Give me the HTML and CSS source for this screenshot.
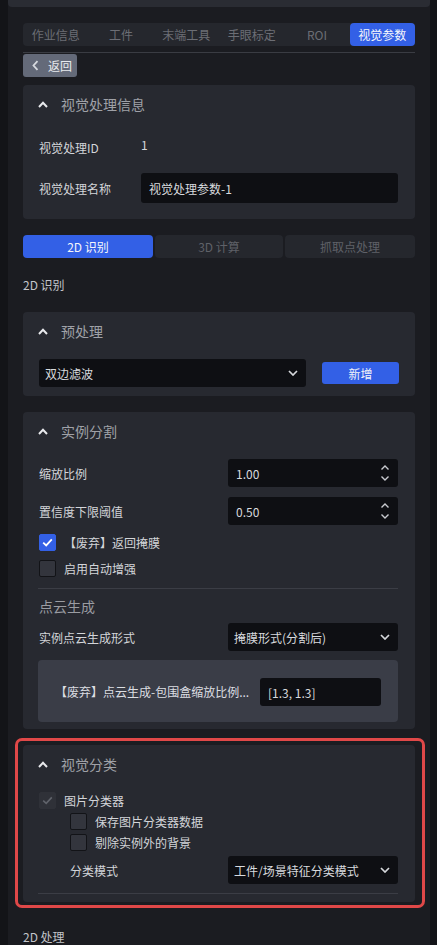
FILE: index.html
```html
<!DOCTYPE html>
<html lang="zh-CN">
<head>
  <meta charset="UTF-8" />
  <meta name="viewport" content="width=device-width, initial-scale=1" />
  <title>视觉参数</title>
  <link rel="stylesheet" href="styles.css">
</head>
<body>
  <div class="panel">
    <div class="prev-card"></div>

    <div class="tabs">
      <div class="tab">作业信息</div>
      <div class="tab">工件</div>
      <div class="tab">末端工具</div>
      <div class="tab">手眼标定</div>
      <div class="tab">ROI</div>
      <div class="tab active">视觉参数</div>
    </div>
    <div class="tab-line"></div>

    <button class="back-btn">
      <svg width="7" height="11" viewBox="0 0 7 11"><path d="M5.5 1.2 L1.5 5.5 L5.5 9.8" fill="none" stroke="#d6d9de" stroke-width="1.8"/></svg>
      返回
    </button>

    <!-- 视觉处理信息 -->
    <div class="card">
      <div class="card-head">
        <svg class="chev" width="10" height="7" viewBox="0 0 10 7"><path d="M1 6 L5 1.8 L9 6" fill="none" stroke="#e8e9ec" stroke-width="2"/></svg>
        <span>视觉处理信息</span>
      </div>
      <div class="card-body info-body">
        <div class="info-row">
          <div class="info-label">视觉处理ID</div>
          <div class="info-value">1</div>
        </div>
        <div class="info-row input-row">
          <div class="info-label">视觉处理名称</div>
          <div class="input wide">视觉处理参数-1</div>
        </div>
      </div>
    </div>

    <div class="segment">
      <div class="seg active">2D 识别</div>
      <div class="seg">3D 计算</div>
      <div class="seg">抓取点处理</div>
    </div>

    <div class="section-label">2D 识别</div>

    <!-- 预处理 -->
    <div class="card">
      <div class="card-head">
        <svg class="chev" width="10" height="7" viewBox="0 0 10 7"><path d="M1 6 L5 1.8 L9 6" fill="none" stroke="#e8e9ec" stroke-width="2"/></svg>
        <span>预处理</span>
      </div>
      <div class="card-body pre-body">
        <div class="select grow">
          <span>双边滤波</span>
          <svg width="10" height="6" viewBox="0 0 10 6"><path d="M1 1 L5 5 L9 1" fill="none" stroke="#d6d8dc" stroke-width="1.7"/></svg>
        </div>
        <button class="add-btn">新增</button>
      </div>
    </div>

    <!-- 实例分割 -->
    <div class="card seg-card">
      <div class="card-head">
        <svg class="chev" width="10" height="7" viewBox="0 0 10 7"><path d="M1 6 L5 1.8 L9 6" fill="none" stroke="#e8e9ec" stroke-width="2"/></svg>
        <span>实例分割</span>
      </div>
      <div class="card-body inst-body">
        <div class="field-row">
          <div class="field-label">缩放比例</div>
          <div class="input spin">
            <span>1.00</span>
            <svg width="10" height="20" viewBox="0 0 10 20"><path d="M1.5 6.5 L5 3 L8.5 6.5 M1.5 13.5 L5 17 L8.5 13.5" fill="none" stroke="#c9cbd0" stroke-width="1.4"/></svg>
          </div>
        </div>
        <div class="field-row">
          <div class="field-label">置信度下限阈值</div>
          <div class="input spin">
            <span>0.50</span>
            <svg width="10" height="20" viewBox="0 0 10 20"><path d="M1.5 6.5 L5 3 L8.5 6.5 M1.5 13.5 L5 17 L8.5 13.5" fill="none" stroke="#c9cbd0" stroke-width="1.4"/></svg>
          </div>
        </div>
        <div class="checks">
          <div class="check-row">
            <span class="box checked"><svg width="11" height="9" viewBox="0 0 11 9"><path d="M1.2 4.6 L4.2 7.4 L9.8 1.4" fill="none" stroke="#fff" stroke-width="1.8"/></svg></span>
            <span>【废弃】返回掩膜</span>
          </div>
          <div class="check-row">
            <span class="box"></span>
            <span>启用自动增强</span>
          </div>
        </div>
        <div class="divider"></div>
        <div class="sub-title">点云生成</div>
        <div class="field-row cloud-row">
          <div class="field-label">实例点云生成形式</div>
          <div class="select">
            <span>掩膜形式(分割后)</span>
            <svg width="10" height="6" viewBox="0 0 10 6"><path d="M1 1 L5 5 L9 1" fill="none" stroke="#d6d8dc" stroke-width="1.7"/></svg>
          </div>
        </div>
        <div class="sub-card">
          <div class="sub-label">【废弃】点云生成-包围盒缩放比例...</div>
          <div class="input small">[1.3, 1.3]</div>
        </div>
      </div>
    </div>

    <!-- 视觉分类 (highlighted) -->
    <div class="highlight">
      <div class="card">
        <div class="card-head">
          <svg class="chev" width="10" height="7" viewBox="0 0 10 7"><path d="M1 6 L5 1.8 L9 6" fill="none" stroke="#e8e9ec" stroke-width="2"/></svg>
          <span>视觉分类</span>
        </div>
        <div class="card-body cls-body">
          <div class="check-row tight">
            <span class="box disabled"><svg width="11" height="9" viewBox="0 0 11 9"><path d="M1.2 4.6 L4.2 7.4 L9.8 1.4" fill="none" stroke="#60636b" stroke-width="1.6"/></svg></span>
            <span>图片分类器</span>
          </div>
          <div class="nested">
            <div class="check-row tight">
              <span class="box"></span>
              <span>保存图片分类器数据</span>
            </div>
            <div class="check-row tight">
              <span class="box"></span>
              <span>剔除实例外的背景</span>
            </div>
            <div class="field-row mode-row">
              <div class="field-label">分类模式</div>
              <div class="select">
                <span>工件/场景特征分类模式</span>
                <svg width="10" height="6" viewBox="0 0 10 6"><path d="M1 1 L5 5 L9 1" fill="none" stroke="#d6d8dc" stroke-width="1.7"/></svg>
              </div>
            </div>
          </div>
          <div class="divider last"></div>
        </div>
      </div>
    </div>

    <div class="section-label bottom">2D 处理</div>
  </div>
</body>
</html>
```

FILE: styles.css
```css
* {
  box-sizing: border-box;
}
body {
  margin: 0;
  background: #131418;
  font-family: "Noto Sans CJK SC", "Noto Sans", sans-serif;
  font-size: 12px;
  color: #d3d5d9;
}
.panel {
  margin: 0 7px 0 8px;
  padding: 0 15px;
  height: 945px;
  overflow: hidden;
  background: #1b1c21;
}
.prev-card {
  height: 7px;
  margin: 0 -15px;
  background: #2a2c33;
  border-radius: 0 0 4px 4px;
}
.tabs {
  margin-top: 16px;
  height: 23px;
  display: grid;
  grid-template-columns: repeat(6, 1fr);
  background: #25272d;
  border-radius: 4px;
}
.tab {
  display: flex;
  align-items: center;
  justify-content: center;
  color: #6c6e75;
  font-size: 12px;
  border-radius: 4px;
}
.tab.active {
  background: #3360e6;
  color: #f4f6fb;
}
.tab-line {
  margin-top: 6px;
  height: 1px;
  background: #3a3c43;
}
.back-btn {
  margin-top: 1px;
  height: 23px;
  width: 54px;
  border: none;
  border-radius: 3px;
  background: #646a79;
  color: #e8eaee;
  font-family: inherit;
  font-size: 12px;
  display: flex;
  align-items: center;
  gap: 9px;
  padding: 0 0 0 9px;
}
.card {
  margin-top: 8px;
  background: #272930;
  border-radius: 4px;
}
.card-head {
  height: 38px;
  display: flex;
  align-items: center;
  gap: 13px;
  padding-left: 15px;
  color: #9fa1a7;
  font-size: 14px;
}
.card-body {
  padding: 0 17px 16px 16px;
}
.input {
  height: 28px;
  background: #0e0f13;
  border-radius: 3px;
  display: flex;
  align-items: center;
  padding: 0 8px;
  color: #d8dade;
  font-size: 12px;
}
.select {
  height: 28px;
  width: 170px;
  background: #0e0f13;
  border-radius: 3px;
  display: flex;
  align-items: center;
  justify-content: space-between;
  padding: 0 8px 0 6px;
  color: #d8dade;
}
.select.grow {
  flex: 1;
  width: auto;
}

/* info card */
.info-body {
  padding-top: 6px;
}
.info-row {
  height: 36px;
  display: flex;
  align-items: center;
}
.info-row.input-row {
  margin-top: 8px;
  height: 30px;
}
.info-label {
  width: 102px;
}
.info-value {
  margin-top: -6px;
}
.input.wide {
  flex: 1;
  height: 30px;
}

.segment {
  margin-top: 16px;
  height: 23px;
  display: grid;
  grid-template-columns: 130px 1fr 130px;
  gap: 2px;
}
.seg {
  display: flex;
  align-items: center;
  justify-content: center;
  background: #25272d;
  color: #5f6168;
  border-radius: 4px;
}
.seg.active {
  background: #3360e6;
  color: #f4f6fb;
}
.section-label {
  margin-top: 18px;
  line-height: 18px;
  color: #c3c5ca;
}
.section-label + .card {
  margin-top: 18px;
}
.section-label.bottom {
  margin-top: 20px;
}

/* pre-processing */
.pre-body {
  padding: 9px 16px 9px 16px;
  display: flex;
  align-items: center;
  gap: 16px;
}
.add-btn {
  width: 77px;
  height: 22px;
  border: none;
  border-radius: 3px;
  background: #3360e6;
  color: #f1f3f8;
  font-family: inherit;
  font-size: 12px;
}

/* instance segmentation */
.seg-card {
  margin-top: 16px;
}
.inst-body {
  padding-top: 9px;
  padding-bottom: 7px;
}
.field-row {
  display: flex;
  align-items: center;
  justify-content: space-between;
}
.field-row + .field-row {
  margin-top: 10px;
}
.input.spin {
  width: 170px;
  justify-content: space-between;
  padding-right: 8px;
}
.checks {
  margin-top: 4px;
}
.check-row {
  height: 26px;
  display: flex;
  align-items: center;
  gap: 8px;
}
.check-row.tight {
  height: 21px;
}
.box {
  width: 17px;
  height: 17px;
  border-radius: 2px;
  background: #33353d;
  border: 1px solid #121317;
  display: flex;
  align-items: center;
  justify-content: center;
}
.box.checked {
  background: #3360e6;
  border-color: #3360e6;
}
.box.disabled {
  background: #2f3138;
  border-color: #2f3138;
}
.divider {
  margin-top: 7px;
  height: 1px;
  margin-left: -1px;
  background: #3b3d45;
}
.sub-title {
  margin-top: 7px;
  line-height: 20px;
  font-size: 14px;
  color: #9a9ca2;
}
.field-row.cloud-row {
  margin-top: 7px;
}
.sub-card {
  margin-top: 9px;
  margin-left: -1px;
  height: 62px;
  background: #3a3d47;
  border-radius: 4px;
  display: flex;
  align-items: center;
  justify-content: space-between;
  padding: 0 17px;
}
.sub-label {
  color: #dcdee2;
}
.input.small {
  width: 121px;
  margin-top: 2px;
}

/* highlighted classification */
.highlight {
  margin: 9px -10px 0 -8px;
  padding: 4px 7px 3px 5px;
  border: 3px solid #e04848;
  border-radius: 7px;
}
.highlight .card {
  margin-top: 0;
}
.cls-body {
  padding-top: 6px;
  padding-bottom: 8px;
}
.cls-body > .check-row {
  height: 22px;
}
.nested {
  padding-left: 31px;
}
.field-row.mode-row {
  margin-top: 3px;
}
.field-row.mode-row .select {
  margin-right: 0;
}
.divider.last {
  margin-top: 9px;
}
```
